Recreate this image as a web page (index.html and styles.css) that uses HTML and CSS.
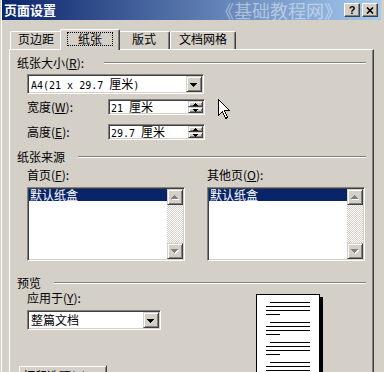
FILE: index.html
```html
<!DOCTYPE html>
<html lang="zh-CN">

<head>
    <meta charset="UTF-8">
    <meta name="viewport" content="width=device-width, initial-scale=1.0">
    <title>页面设置</title>
    <link rel="stylesheet" href="styles.css">
</head>

<body>
    <div class="window">
        <div class="titlebar">
            <span class="title">页面设置</span>
            <span class="watermark">《基础教程网》</span>
            <span class="tbtn help">?</span>
            <span class="tbtn">
                <svg width="8" height="7" viewBox="0 0 8 7"><path d="M1 0.5l6 6M7 0.5l-6 6" stroke="#000" stroke-width="1.6"/></svg>
            </span>
        </div>

        <div class="tabs">
            <div class="tab t1">页边距</div>
            <div class="tab active"><span class="focus">纸张</span></div>
            <div class="tab t3">版式</div>
            <div class="tab t4">文档网格</div>
        </div>

        <div class="panel">
            <div class="group">
                <span>纸张大小(<u>R</u>):</span>
                <span class="line first"></span>
            </div>
            <div class="combo sunken size-combo">
                <span class="combo-text"><span class="mono">A4(21 x 29.7 </span>厘米<span class="mono">)</span></span>
                <span class="drop raised">
                    <svg width="12" height="12" viewBox="0 0 12 12" shape-rendering="crispEdges"><path d="M2 5h7v1h-1v1h-1v1h-1v1h-1v-1h-1v-1h-1v-1h-1z" fill="#000"/></svg>
                </span>
            </div>
            <div class="field-row r1">
                <label>宽度(<u>W</u>):</label>
                <div class="spinbox sunken">
                    <span class="spin-text"><span class="mono">21 </span>厘米</span>
                    <span class="spin">
                        <span class="raised"><svg width="5" height="3" viewBox="0 0 5 3" shape-rendering="crispEdges"><path d="M2 0h1v1h1v1h1v1H0V2h1V1h1z"/></svg></span>
                        <span class="raised"><svg width="5" height="3" viewBox="0 0 5 3" shape-rendering="crispEdges"><path d="M0 0h5v1H4v1H3v1H2V2H1V1H0z"/></svg></span>
                    </span>
                </div>
            </div>
            <div class="field-row r2">
                <label>高度(<u>E</u>):</label>
                <div class="spinbox sunken">
                    <span class="spin-text"><span class="mono">29.7 </span>厘米</span>
                    <span class="spin">
                        <span class="raised"><svg width="5" height="3" viewBox="0 0 5 3" shape-rendering="crispEdges"><path d="M2 0h1v1h1v1h1v1H0V2h1V1h1z"/></svg></span>
                        <span class="raised"><svg width="5" height="3" viewBox="0 0 5 3" shape-rendering="crispEdges"><path d="M0 0h5v1H4v1H3v1H2V2H1V1H0z"/></svg></span>
                    </span>
                </div>
            </div>

            <div class="group g2">
                <span>纸张来源</span>
                <span class="line"></span>
            </div>
            <div class="cols">
                <span class="sub">首页(<u>F</u>):</span>
                <span class="sub">其他页(<u>O</u>):</span>
                <div class="list sunken">
                    <div class="items"><div class="sel">默认纸盒</div></div>
                    <div class="sb">
                        <span class="raised"><svg width="12" height="12" viewBox="0 0 12 12" shape-rendering="crispEdges"><path transform="translate(1 1)" d="M5 4h1v1h1v1h1v1h1v1H2V7h1V6h1V5h1z" fill="#fff"/><path d="M5 4h1v1h1v1h1v1h1v1H2V7h1V6h1V5h1z" fill="#808080"/></svg></span>
                        <span class="raised"><svg width="12" height="12" viewBox="0 0 12 12" shape-rendering="crispEdges"><path transform="translate(1 1)" d="M2 4h7v1h-1v1h-1v1h-1v1h-1v-1h-1v-1h-1v-1h-1z" fill="#fff"/><path d="M2 4h7v1h-1v1h-1v1h-1v1h-1v-1h-1v-1h-1v-1h-1z" fill="#808080"/></svg></span>
                    </div>
                </div>
                <div class="list sunken">
                    <div class="items"><div class="sel">默认纸盒</div></div>
                    <div class="sb">
                        <span class="raised"><svg width="12" height="12" viewBox="0 0 12 12" shape-rendering="crispEdges"><path transform="translate(1 1)" d="M5 4h1v1h1v1h1v1h1v1H2V7h1V6h1V5h1z" fill="#fff"/><path d="M5 4h1v1h1v1h1v1h1v1H2V7h1V6h1V5h1z" fill="#808080"/></svg></span>
                        <span class="raised"><svg width="12" height="12" viewBox="0 0 12 12" shape-rendering="crispEdges"><path transform="translate(1 1)" d="M2 4h7v1h-1v1h-1v1h-1v1h-1v-1h-1v-1h-1v-1h-1z" fill="#fff"/><path d="M2 4h7v1h-1v1h-1v1h-1v1h-1v-1h-1v-1h-1v-1h-1z" fill="#808080"/></svg></span>
                    </div>
                </div>
            </div>

            <div class="group g3">
                <span>预览</span>
                <span class="line"></span>
            </div>
            <div class="preview-row">
                <div class="apply">
                    <span class="sub">应用于(<u>Y</u>):</span>
                    <div class="combo sunken apply-combo">
                        <span class="combo-text">整篇文档</span>
                        <span class="drop raised">
                            <svg width="12" height="12" viewBox="0 0 12 12" shape-rendering="crispEdges"><path d="M2 5h7v1h-1v1h-1v1h-1v1h-1v-1h-1v-1h-1v-1h-1z" fill="#000"/></svg>
                        </span>
                    </div>
                    <div class="btn raised">打印选项(<u>T</u>)...</div>
                </div>
                <div class="page">
                    <div class="para"><i class="ln in"></i><i class="ln"></i><i class="ln"></i><i class="ln short"></i></div>
                    <div class="para"><i class="ln in"></i><i class="ln"></i><i class="ln"></i><i class="ln short"></i></div>
                    <div class="para"><i class="ln in"></i><i class="ln"></i><i class="ln"></i><i class="ln short"></i></div>
                    <div class="para"><i class="ln in"></i><i class="ln"></i><i class="ln"></i><i class="ln short"></i></div>
                </div>
            </div>

            <!-- ponteiro do mouse por cima do diálogo -->
            <svg class="cursor" width="13" height="21" viewBox="0 0 13 21" shape-rendering="crispEdges">
                <path d="M0.5 0.5V16.5L4.5 12.5L7.5 19.5L9.5 18.5L6.5 11.5H11.5Z" fill="#fff" stroke="#000" stroke-width="1"/>
            </svg>
        </div>
    </div>
</body>

</html>
```

FILE: styles.css
```css
* {
    box-sizing: border-box;
}

body {
    margin: 0;
    width: 384px;
    height: 372px;
    overflow: hidden;
    background-color: #d4d0c8;
    font-family: "Noto Sans CJK SC", sans-serif;
    font-size: 12px;
    color: #000;
}

u {
    text-decoration: underline;
    text-underline-offset: 1px;
}

.mono {
    font-family: "DejaVu Sans Mono", monospace;
    font-size: 10px;
    white-space: pre;
}

.window {
    width: 384px;
    height: 372px;
    overflow: hidden;
    background-color: #d4d0c8;
    border-left: 1px solid #d4d0c8;
    box-shadow: inset 1px 0 #fff;
    padding: 0 3px 0 1px;
}

/* barra de título */
.titlebar {
    height: 20px;
    display: flex;
    align-items: center;
    padding: 0 3px 0 2px;
    background: linear-gradient(to right, #0a246a, #a6caf0);
    color: #fff;
}

.title {
    font-weight: bold;
    font-size: 13px;
    line-height: 14px;
}

.watermark {
    margin-left: auto;
    margin-right: 2px;
    font-size: 18px;
    line-height: 19px;
    color: rgba(255, 255, 255, 0.45);
}

.raised {
    background-color: #d4d0c8;
    border: 1px solid;
    border-color: #d4d0c8 #404040 #404040 #d4d0c8;
    box-shadow: inset 1px 1px #fff, inset -1px -1px #808080;
}

.sunken {
    background-color: #fff;
    border: 1px solid;
    border-color: #808080 #fff #fff #808080;
    box-shadow: inset 1px 1px #404040, inset -1px -1px #d4d0c8;
    padding: 1px;
}

.tbtn {
    width: 16px;
    height: 14px;
    display: flex;
    align-items: center;
    justify-content: center;
    background-color: #d4d0c8;
    border: 1px solid;
    border-color: #fff #404040 #404040 #fff;
    box-shadow: inset -1px -1px #808080;
    color: #000;
}

.tbtn+.tbtn {
    margin-left: 2px;
}

.help {
    font-family: "Liberation Sans", sans-serif;
    font-weight: bold;
    font-size: 11px;
    line-height: 11px;
}

/* abas */
.tabs {
    height: 29px;
    display: flex;
    align-items: flex-end;
    padding-left: 8px;
}

.tab {
    height: 18px;
    padding-top: 1px;
    line-height: 12px;
    text-align: center;
    border: 1px solid;
    border-bottom: none;
    border-color: #fff #404040 transparent #fff;
    border-radius: 2px 2px 0 0;
    box-shadow: inset -1px 0 #808080;
}

.t1 {
    width: 52px;
}

.t3 {
    width: 52px;
}

.t4 {
    width: 66px;
}

.tab.active {
    position: relative;
    z-index: 1;
    width: 60px;
    height: 21px;
    margin: 0 -2px -1px -2px;
    padding-top: 2px;
    background-color: #d4d0c8;
}

.focus {
    display: inline-block;
    padding: 0 10px;
    line-height: 12px;
    border: 1px dotted #000;
}

/* painel */
.panel {
    position: relative;
    height: 330px;
    margin: 0 7px;
    padding: 6px 7px 0 7px;
    border-top: 1px solid #fff;
    border-left: 1px solid #fff;
    border-right: 1px solid #404040;
    box-shadow: inset -1px 0 #808080;
}

.group {
    display: flex;
    align-items: center;
    line-height: 14px;
}

.line {
    flex: 1;
    height: 2px;
    margin-left: 13px;
    border-top: 1px solid #808080;
    border-bottom: 1px solid #fff;
}

.line.first {
    margin-left: 20px;
}

.g2 {
    margin-top: 10px;
}

.g3 {
    margin-top: 15px;
}

.combo {
    display: flex;
    height: 20px;
}

.combo-text {
    flex: 1;
    padding-left: 2px;
    line-height: 16px;
}

.drop {
    width: 16px;
    height: 16px;
    display: flex;
    align-items: center;
    justify-content: center;
}

.size-combo {
    width: 177px;
    margin: 4px 0 0 10px;
}

.field-row {
    display: flex;
    align-items: center;
    margin-left: 10px;
}

.field-row label {
    width: 81px;
    line-height: 14px;
}

.r1 {
    margin-top: 5px;
}

.r2 {
    margin-top: 9px;
}

.spinbox {
    display: flex;
    width: 97px;
    height: 16px;
}

.spin-text {
    flex: 1;
    padding-left: 1px;
    line-height: 12px;
}

.spin {
    width: 15px;
    display: flex;
    flex-direction: column;
}

.spin span {
    flex: 1;
    display: flex;
    align-items: center;
    justify-content: center;
}

.cols {
    display: grid;
    grid-template-columns: 158px 158px;
    column-gap: 22px;
    margin-left: 10px;
}

.sub {
    display: block;
    margin-top: 4px;
    line-height: 14px;
}

.list {
    display: flex;
    height: 74px;
    margin-top: 5px;
}

.items {
    flex: 1;
}

.sel {
    height: 12px;
    padding-left: 1px;
    line-height: 12px;
    background-color: #0a246a;
    color: #fff;
}

.sb {
    width: 16px;
    display: flex;
    flex-direction: column;
    justify-content: space-between;
    background-image: repeating-conic-gradient(#d4d0c8 0 25%, #fff 0 50%);
    background-size: 2px 2px;
}

.sb span {
    height: 16px;
    display: flex;
    align-items: center;
    justify-content: center;
}

/* pré-visualização */
.preview-row {
    display: flex;
    align-items: flex-start;
    margin-left: 10px;
}

.apply {
    width: 134px;
}

.apply .sub {
    margin-top: 1px;
}

.apply-combo {
    width: 134px;
    margin-top: 5px;
}

.btn {
    width: 89px;
    height: 23px;
    margin: 35px 0 0 -9px;
    padding: 3px 0 0 4px;
    line-height: 14px;
}

.page {
    width: 64px;
    height: 90px;
    margin: 4px 0 0 95px;
    padding: 7px 9px 0 9px;
    background-color: #fff;
    border: 1px solid #000;
    box-shadow: 3px 3px 0 #000;
}

.para {
    display: flex;
    flex-direction: column;
    gap: 3px;
    margin-bottom: 7px;
}

.ln {
    display: block;
    width: 44px;
    height: 1px;
    background-color: #000;
}

.ln.in {
    width: 40px;
    margin-left: 4px;
}

.ln.short {
    width: 14px;
}

.cursor {
    position: absolute;
    left: 208px;
    top: 49px;
}
```
